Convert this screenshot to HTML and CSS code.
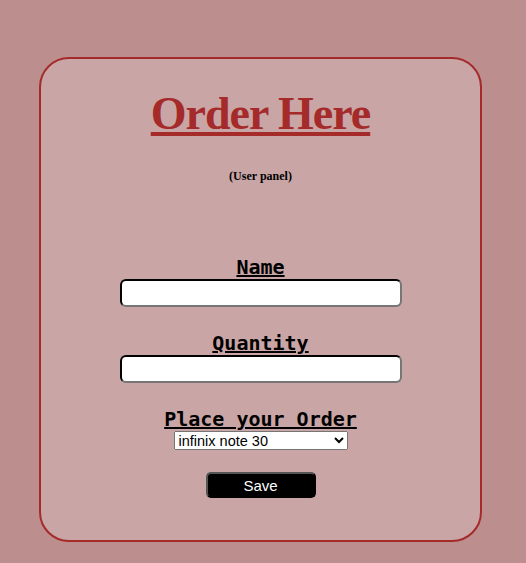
FILE: index.html
```html
<!DOCTYPE html>
<html lang="en">
<head>
    <meta charset="UTF-8">
    <meta name="viewport" content="width=device-width, initial-scale=1.0">
    <title>Order Here</title>
    <link rel="stylesheet" href="styles.css">
</head>
<body>
    <div class="card">
        <h1 class="title">Order Here</h1>
        <p class="sub">(User panel)</p>

        <form class="order-form" onsubmit="return false">
            <label for="Name">Name</label>
            <input type="text" id="Name">

            <label for="Quantity">Quantity</label>
            <input type="text" id="Quantity">

            <label for="Product">Place your Order</label>
            <select id="Product">
                <option>infinix note 30</option>
                <option>infinix hot 40</option>
                <option>tecno spark 20</option>
            </select>

            <button type="submit">Save</button>
        </form>
    </div>
</body>
</html>
```

FILE: styles.css
```css
body {
    margin: 0;
    background-color: #bc8e8e;
    font-family: "Liberation Serif", serif;
}

.card {
    width: 439px;
    height: 481px;
    margin: 57px 0 0 39px;
    background-color: #c9a5a5;
    border: 2px solid #a52a2a;
    border-radius: 30px;
    text-align: center;
}

.title {
    margin: 28px 0 0;
    color: #a52a2a;
    font-size: 46px;
    letter-spacing: -1px;
    font-weight: bold;
    text-decoration: underline;
    line-height: 54px;
}

.sub {
    margin: 28px 0 0;
    font-size: 12px;
    font-weight: bold;
}

.order-form {
    display: flex;
    flex-direction: column;
    align-items: center;
    margin-top: 71px;
}

.order-form label {
    font-family: "DejaVu Sans Mono", monospace;
    font-size: 20px;
    font-weight: bold;
    text-decoration: underline;
    line-height: 24px;
}

.order-form input {
    width: 282px;
    height: 28px;
    box-sizing: border-box;
    border: 2px inset #222;
    border-radius: 6px;
    margin-bottom: 24px;
}

.order-form select {
    width: 174px;
    height: 19px;
    font-family: "Liberation Sans", Arial, sans-serif;
    font-size: 14.5px;
    margin-bottom: 22px;
}

.order-form button {
    width: 110px;
    height: 26px;
    background-color: black;
    color: white;
    border: 2px outset #555;
    border-radius: 5px;
    font-family: "Liberation Sans", Arial, sans-serif;
    font-size: 15px;
    cursor: pointer;
}
```
